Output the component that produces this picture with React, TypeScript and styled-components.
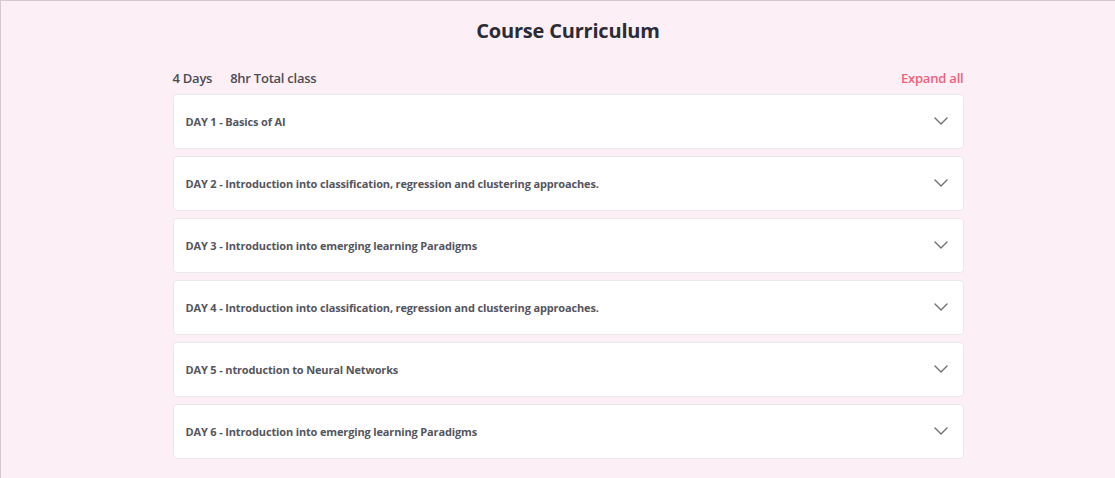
import React from "react";
import styled, { createGlobalStyle } from "styled-components";

const Global = createGlobalStyle`
  html, body { margin: 0; padding: 0; }
  body { font-family: "Open Sans", "Liberation Sans", sans-serif; background: #fcf0f6; }
  * { box-sizing: border-box; }
`;

const Page = styled.div`
  min-height: 478px;
  background: #fcf0f6;
  border-top: 1px solid #d3c9ce;
  border-left: 1px solid #d3c9ce;
  display: flex;
  justify-content: center;
  padding: 0 0 0 20px;
`;

const Section = styled.section`
  width: 791px;
  display: flex;
  flex-direction: column;
`;

const Title = styled.h2`
  margin: 17px 0 0;
  text-align: center;
  font-size: 20px;
  line-height: 26px;
  font-weight: 700;
  color: #2b2b35;
  letter-spacing: -0.2px;
`;

const Meta = styled.div`
  display: flex;
  align-items: center;
  justify-content: space-between;
  margin-top: 25px;
  height: 18px;
`;

const Stats = styled.div`
  display: flex;
  gap: 18px;
  font-size: 13px;
  font-weight: 600;
  color: #4c4c55;
  letter-spacing: -0.25px;
`;

const Expand = styled.button`
  border: none;
  background: none;
  padding: 0;
  font-family: inherit;
  font-size: 13px;
  font-weight: 600;
  color: #f2607a;
  letter-spacing: -0.2px;
  cursor: pointer;
`;

const List = styled.div`
  display: flex;
  flex-direction: column;
  gap: 7px;
  margin-top: 7px;
`;

const Card = styled.div`
  height: 55px;
  background: #ffffff;
  border: 1px solid #ebe7ea;
  border-radius: 4px;
  display: flex;
  align-items: center;
  justify-content: space-between;
  padding: 0 15px 1px 12px;
`;

const CardTitle = styled.span`
  font-size: 11px;
  font-weight: 700;
  color: #55555e;
  letter-spacing: -0.15px;
`;

const Chevron = () => (
  <svg width="14" height="8" viewBox="0 0 14 8" fill="none">
    <path d="M1 1l6 6 6-6" stroke="#6f6f76" strokeWidth="1.4" strokeLinecap="round" strokeLinejoin="round" />
  </svg>
);

const days = [
  "DAY 1 - Basics of AI",
  "DAY 2 - Introduction into classification, regression and clustering approaches.",
  "DAY 3 - Introduction into emerging learning Paradigms",
  "DAY 4 - Introduction into classification, regression and clustering approaches.",
  "DAY 5 - ntroduction to Neural Networks",
  "DAY 6 - Introduction into emerging learning Paradigms",
];

export default function App() {
  return (
    <>
      <Global />
      <Page>
        <Section>
          <Title>Course Curriculum</Title>
          <Meta>
            <Stats>
              <span>4 Days</span>
              <span>8hr Total class</span>
            </Stats>
            <Expand>Expand all</Expand>
          </Meta>
          <List>
            {days.map((d) => (
              <Card key={d}>
                <CardTitle>{d}</CardTitle>
                <Chevron />
              </Card>
            ))}
          </List>
        </Section>
      </Page>
    </>
  );
}
